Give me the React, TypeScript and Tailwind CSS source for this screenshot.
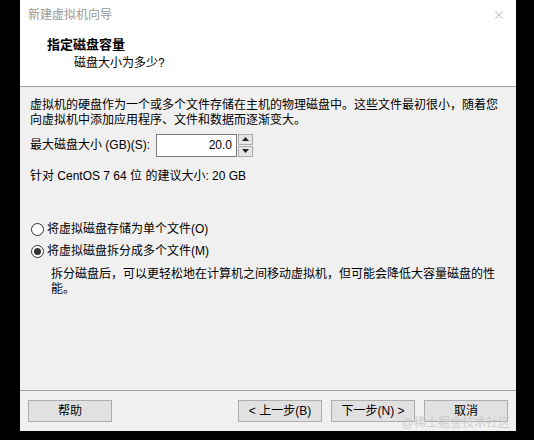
import { X } from 'lucide-react'

const font = { fontFamily: '"Liberation Sans", "Noto Sans CJK SC", sans-serif' }

function Radio({ checked, label }: { checked?: boolean; label: string }) {
    return (
        <div className="flex items-center h-[15px]">
            <span className="w-[13px] h-[13px] rounded-full border border-[#333] bg-white flex items-center justify-center">
                {checked && <span className="w-[7px] h-[7px] rounded-full bg-[#333]" />}
            </span>
            <span className="ml-[3px]">{label}</span>
        </div>
    )
}

function Btn({ label }: { label: string }) {
    return (
        <button className="w-[84px] h-[22px] bg-[#e1e1e1] border border-[#adadad] text-[12px] text-black leading-none">
            {label}
        </button>
    )
}

export default function App() {
    return (
        <div className="w-[534px] h-[440px] bg-black pl-[20px] text-[12px] text-black" style={font}>
            <div className="relative w-[496px] h-[431px] flex flex-col bg-[#f0f0f0]">
                {/* Header */}
                <div className="h-[87px] bg-white border-b border-[#a0a0a0]">
                    <div className="h-[29px] flex items-center justify-between pl-[8px] pr-[10px]">
                        <span className="text-[#999]">新建虚拟机向导</span>
                        <X className="w-[14px] h-[14px] text-[#888]" strokeWidth={1} />
                    </div>
                    <div className="pl-[27px] pt-[8px] font-bold text-[13px] leading-[16px]">指定磁盘容量</div>
                    <div className="pl-[54px] pt-[2px] leading-[16px]">磁盘大小为多少?</div>
                </div>

                {/* Body */}
                <div className="flex-1 px-[10px] pt-[11px] leading-[15px]">
                    <p>
                        虚拟机的硬盘作为一个或多个文件存储在主机的物理磁盘中。这些文件最初很小，随着您
                        <br />
                        向虚拟机中添加应用程序、文件和数据而逐渐变大。
                    </p>
                    <div className="flex items-center mt-[5px] h-[24px]">
                        <span>最大磁盘大小 (GB)(S):</span>
                        <div className="ml-[6px] w-[81px] h-[23px] bg-white border border-[#7a7a7a] flex items-center justify-end pr-[4px]">
                            20.0
                        </div>
                        <div className="ml-[1px] flex flex-col gap-[1px]">
                            <div className="w-[15px] h-[11px] bg-[#e5e5e5] border border-[#acacac] flex items-center justify-center">
                                <svg width="7" height="4" viewBox="0 0 7 4"><path d="M0 4 L3.5 0 L7 4 Z" fill="#222" /></svg>
                            </div>
                            <div className="w-[15px] h-[11px] bg-[#e5e5e5] border border-[#acacac] flex items-center justify-center">
                                <svg width="7" height="4" viewBox="0 0 7 4"><path d="M0 0 L3.5 4 L7 0 Z" fill="#222" /></svg>
                            </div>
                        </div>
                    </div>
                    <div className="mt-[12px]">针对 CentOS 7 64 位 的建议大小: 20 GB</div>

                    <div className="mt-[38px] flex flex-col gap-[7px] pl-[1px]">
                        <Radio label="将虚拟磁盘存储为单个文件(O)" />
                        <Radio checked label="将虚拟磁盘拆分成多个文件(M)" />
                    </div>
                    <p className="pl-[21px] mt-[8px]">
                        拆分磁盘后，可以更轻松地在计算机之间移动虚拟机，但可能会降低大容量磁盘的性
                        <br />
                        能。
                    </p>
                </div>

                {/* Footer */}
                <div className="h-[41px] border-t border-[#a0a0a0] flex items-center px-[8px] pb-[1px]">
                    <Btn label="帮助" />
                    <div className="ml-auto flex gap-[9px]">
                        <Btn label="< 上一步(B)" />
                        <Btn label="下一步(N) >" />
                        <Btn label="取消" />
                    </div>
                </div>

                <span className="absolute right-[6px] bottom-[1px] text-[12px] leading-[14px] text-[#c4c4c4]/80">
                    @稀土掘金技术社区
                </span>
            </div>
        </div>
    )
}
